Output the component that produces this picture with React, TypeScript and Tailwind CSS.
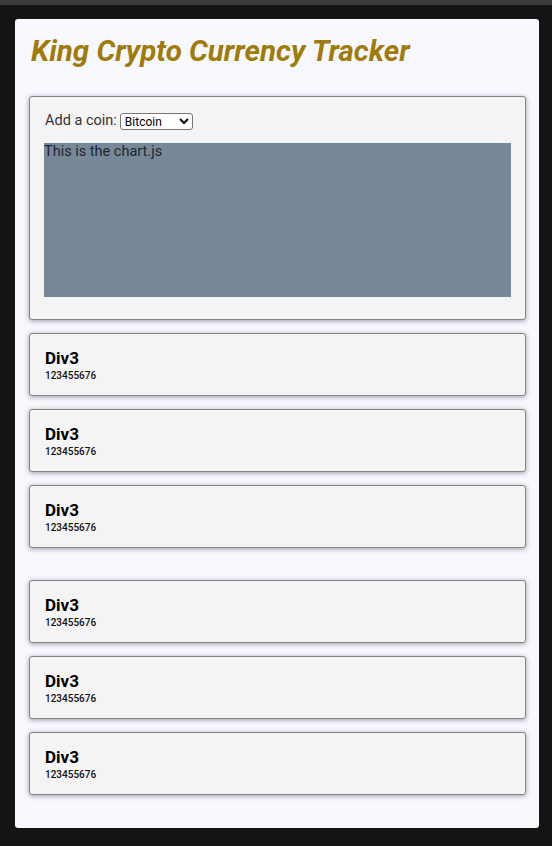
const coins = ['Bitcoin', 'Ethereum', 'Litecoin', 'Dogecoin']

// cards are split in two groups in the reference
const groups = [
  ['a', 'b', 'c'],
  ['d', 'e', 'f']
]

function CoinCard() {
  return (
    <div className="rounded-[3px] border border-[#858585] bg-[#f4f4f4] pl-[15px] pt-[14px] pb-[13px] shadow-[0_1px_5px_rgba(40,40,60,0.45)]">
      <h3 className="text-[17px] leading-[21px] font-bold text-black">Div3</h3>
      <p className="mt-[1px] text-[10px] leading-[12px] font-medium text-[#111]">123455676</p>
    </div>
  )
}

export default function App() {
  return (
    <div
      className="min-h-[846px] border-t-[5px] border-[#3c3c3c] bg-[#141414] pl-[15px] pr-[13px] pt-[14px] pb-[18px]"
      style={{ fontFamily: 'Roboto, "Noto Sans", sans-serif' }}
    >
      <div className="rounded-[3px] bg-[#f8f8ff] pl-[14px] pr-[13px] pt-[16px] pb-[33px]">
        <h1 className="pl-[2px] text-[29.5px] leading-[33px] font-bold italic text-[#a07b0a]">
          King Crypto Currency Tracker
        </h1>

        {/* chart panel */}
        <div className="mt-[28px] rounded-[3px] border border-[#858585] bg-[#f4f4f4] px-[14px] pt-[15px] pb-[22px] shadow-[0_1px_5px_rgba(40,40,60,0.45)]">
          <div className="flex items-center gap-[3px] pl-[1px] text-[14.5px] leading-[18px] text-[#333]">
            <span>Add a coin:</span>
            <select
              defaultValue="Bitcoin"
              className="h-[17px] w-[73px] rounded-[3px] border border-[#767676] bg-white text-[12px] leading-[14px] text-black"
              style={{ fontFamily: 'Roboto, "Liberation Sans", sans-serif' }}
            >
              {coins.map(c => (
                <option key={c}>{c}</option>
              ))}
            </select>
          </div>
          <div className="mt-[13px] h-[154px] bg-[#778899] text-[14.5px] leading-[18px] text-[#1f2630]">
            This is the chart.js
          </div>
        </div>

        {groups.map((g, gi) => (
          <div key={gi} className={gi === 0 ? 'mt-[13px] flex flex-col gap-[13px]' : 'mt-[32px] flex flex-col gap-[13px]'}>
            {g.map(k => (
              <CoinCard key={k} />
            ))}
          </div>
        ))}
      </div>
    </div>
  )
}
